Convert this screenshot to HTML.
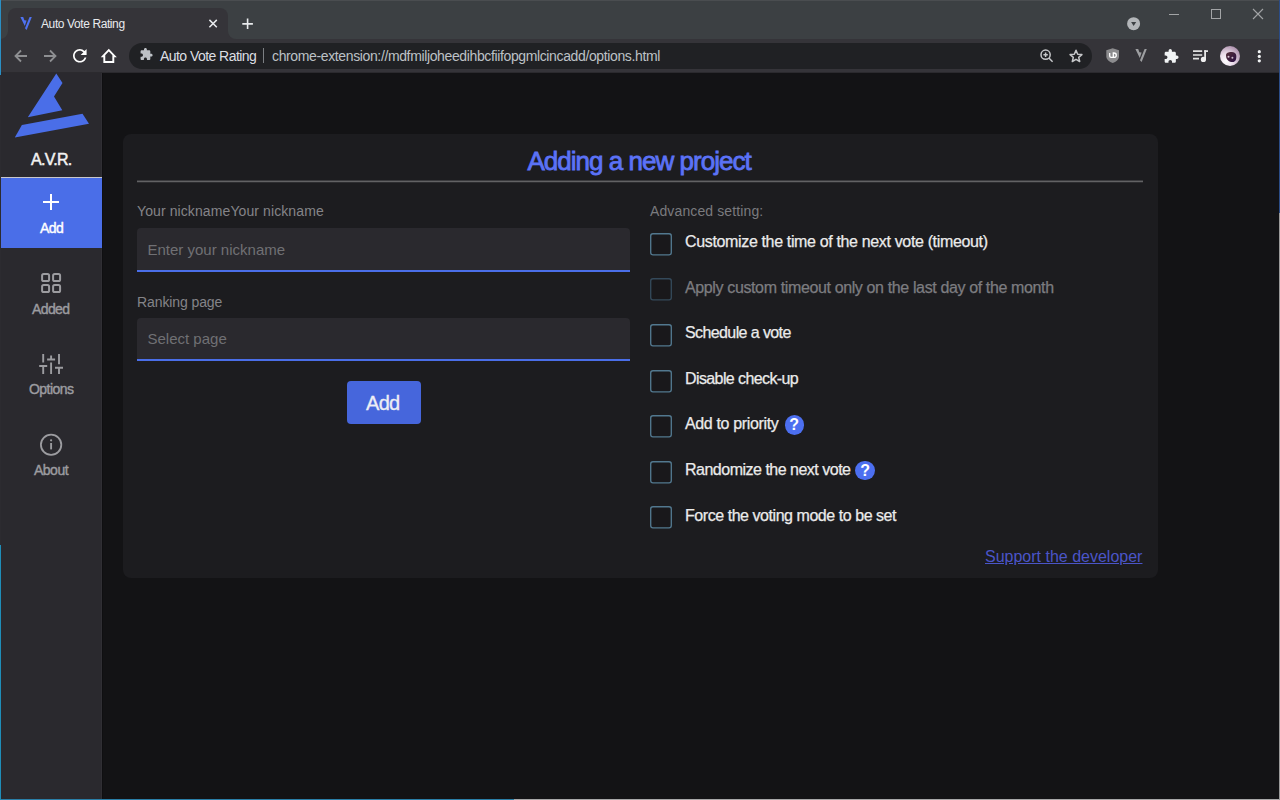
<!DOCTYPE html>
<html><head><meta charset="utf-8">
<style>
*{box-sizing:border-box;margin:0;padding:0}
html,body{width:1280px;height:800px;overflow:hidden}
body{position:relative;background:#3c4043;font-family:"Liberation Sans",sans-serif}
.a{position:absolute}
.t{position:absolute;white-space:nowrap;line-height:1}
.s{-webkit-text-stroke:0.25px currentColor}
.n{-webkit-text-stroke:0.4px currentColor}
svg{position:absolute;overflow:visible}
</style></head><body>
<!-- desktop edges -->
<div class="a" style="left:1px;top:0;width:1279px;height:1px;background:#4a4d50"></div>

<!-- tab -->
<div class="a" style="left:8px;top:8px;width:220px;height:32px;background:#353439;border-radius:8px 8px 0 0"></div>
<svg style="left:0;top:31px" width="8" height="9"><path d="M0 8 A8 8 0 0 0 8 0 V9 H0Z" fill="#353439"/></svg>
<svg style="left:228px;top:31px" width="8" height="9"><path d="M8 8 A8 8 0 0 1 0 0 V9 H8Z" fill="#353439"/></svg>
<!-- favicon -->
<svg style="left:0;top:0" width="40" height="40" viewBox="0 0 40 40"><path d="M20.4 17 L23.2 17 L24.4 20.2 L26.6 20.6 L24.8 26Z" fill="#4f72f2"/><path d="M29.6 17 L31.8 17 L26.6 30 L25 28.2Z" fill="#4f72f2"/></svg>
<div class="t" style="left:41px;top:18px;font-size:12px;color:#e8eaed;letter-spacing:-0.4px">Auto Vote Rating</div>
<!-- tab close -->
<svg style="left:0;top:0" width="260" height="40" viewBox="0 0 260 40"><path d="M209.4 19.9 L216.8 27.3 M216.8 19.9 L209.4 27.3" stroke="#e8eaed" stroke-width="1.5"/><path d="M247.6 18.6 V29.1 M242.3 23.85 H252.9" stroke="#e8eaed" stroke-width="1.6"/></svg>
<!-- new tab -->

<!-- tab search -->
<svg style="left:1100px;top:0" width="60" height="40" viewBox="1100 0 60 40"><circle cx="1133.6" cy="23.7" r="6.5" fill="#b3b6b9"/><path d="M1131.1 22 H1136.2 L1133.65 25.9Z" fill="#3c4043"/></svg>
<!-- window controls -->
<div class="a" style="left:1169px;top:14px;width:10px;height:1px;background:#a2a4a6"></div>
<div class="a" style="left:1211px;top:9px;width:10px;height:10px;border:1px solid #a2a4a6"></div>
<svg style="left:1253px;top:9px" width="10" height="10"><path d="M0 0 L10 10 M10 0 L0 10" stroke="#a2a4a6" stroke-width="1.1"/></svg>

<!-- toolbar -->
<div class="a" style="left:1px;top:39px;width:1278px;height:34px;background:#353439"></div><div class="a" style="left:1px;top:72px;width:1278px;height:1px;background:#2b2a2e"></div>
<svg style="left:14px;top:49px" width="14" height="14"><path d="M13 7 H1.5 M7 1.5 L1.5 7 L7 12.5" stroke="#8e8f92" stroke-width="1.8" fill="none"/></svg>
<svg style="left:43px;top:49px" width="14" height="14"><path d="M1 7 H12.5 M7 1.5 L12.5 7 L7 12.5" stroke="#8e8f92" stroke-width="1.8" fill="none"/></svg>
<svg style="left:72.5px;top:49.3px" width="13.6" height="13.6" viewBox="4 4 16 16"><path d="M17.65 6.35A7.958 7.958 0 0012 4c-4.42 0-7.99 3.58-7.99 8s3.57 8 7.99 8c3.73 0 6.84-2.55 7.73-6h-2.08A5.99 5.99 0 0112 18c-3.31 0-6-2.690-6-6s2.69-6 6-6c1.66 0 3.140.69 4.220 1.78L13 11h7V4l-2.35 2.35z" fill="#fff"/></svg>
<svg style="left:0;top:40px" width="130" height="30" viewBox="0 40 130 30"><path d="M103 56.2 L108.8 50.2 L114.6 56.2 H113.3 V62 H104.3 V56.2Z" stroke="#fff" stroke-width="1.9" fill="none" stroke-linejoin="miter" stroke-miterlimit="3"/></svg>

<!-- omnibox -->
<div class="a" style="left:129px;top:43px;width:963px;height:26px;border-radius:13px;background:#202124"></div>
<svg style="left:139.8px;top:48.2px" width="12.6" height="12.6" viewBox="1 1 22 22"><path d="M20.5 11H19V7c0-1.1-.9-2-2-2h-4V3.5C13 2.12 11.88 1 10.5 1S8 2.12 8 3.5V5H4c-1.1 0-1.99.9-1.99 2v3.8H3.5c1.49 0 2.7 1.21 2.7 2.7s-1.21 2.7-2.7 2.7H2V20c0 1.1.9 2 2 2h3.8v-1.5c0-1.49 1.21-2.7 2.7-2.7 1.49 0 2.7 1.21 2.7 2.7V22H17c1.1 0 2-.9 2-2v-4h1.5c1.38 0 2.5-1.12 2.5-2.5S21.88 11 20.5 11z" fill="#bdc1c6"/></svg>
<div class="t" style="left:160px;top:49px;font-size:14px;color:#dcdee2;letter-spacing:-0.55px">Auto Vote Rating</div>
<div class="a" style="left:263px;top:48px;width:1px;height:15px;background:#7c7f83"></div>
<div class="t" style="left:272px;top:49px;font-size:14px;color:#bdc1c6;letter-spacing:-0.37px">chrome-extension://mdfmiljoheedihbcfiifopgmlcincadd/options.html</div>
<!-- zoom icon -->
<svg style="left:0;top:40px" width="1100" height="30" viewBox="0 40 1100 30"><circle cx="1045.6" cy="54.7" r="4.6" stroke="#c6c7c9" stroke-width="1.5" fill="none"/><path d="M1048.9 58 L1052.6 61.7 M1045.6 52.5 V56.9 M1043.4 54.7 H1047.8" stroke="#c6c7c9" stroke-width="1.5"/>
<path d="M1076 50.3 L1077.7 54.2 L1081.9 54.6 L1078.7 57.4 L1079.7 61.5 L1076 59.3 L1072.3 61.5 L1073.3 57.4 L1070.1 54.6 L1074.3 54.2Z" stroke="#c6c7c9" stroke-width="1.5" fill="none" stroke-linejoin="round"/></svg>

<!-- extensions -->
<svg style="left:0;top:0" width="1280" height="80" viewBox="0 0 1280 80"><path d="M1112.7 48.2 L1119 50.2 V56.5 C1119 59.5 1116 61.8 1112.7 63 C1109.4 61.8 1106.3 59.5 1106.3 56.5 V50.2Z" fill="#8c8c8e"/><path d="M1109.7 53 V55.9 Q1109.7 57.3 1111.1 57.3 H1113.3 V53 H1114 Q1116.3 53 1116.3 55.15 Q1116.3 57.3 1114 57.3 H1113.3" stroke="#fff" stroke-width="1.3" fill="none"/></svg>
<svg style="left:1115.2px;top:32px" width="40" height="40" viewBox="0 0 40 40"><path d="M20.4 17 L23.2 17 L24.4 20.2 L26.6 20.6 L24.8 26Z" fill="#9d9ea1"/><path d="M29.6 17 L31.8 17 L26.6 30 L25 28.2Z" fill="#9d9ea1"/></svg>
<svg style="left:1164px;top:48.5px" width="14.5" height="14.5" viewBox="1 1 22 22"><path d="M20.5 11H19V7c0-1.1-.9-2-2-2h-4V3.5C13 2.12 11.88 1 10.5 1S8 2.12 8 3.5V5H4c-1.1 0-1.99.9-1.99 2v3.8H3.5c1.49 0 2.7 1.21 2.7 2.7s-1.21 2.7-2.7 2.7H2V20c0 1.1.9 2 2 2h3.8v-1.5c0-1.49 1.21-2.7 2.7-2.7 1.49 0 2.7 1.21 2.7 2.7V22H17c1.1 0 2-.9 2-2v-4h1.5c1.38 0 2.5-1.12 2.5-2.5S21.88 11 20.5 11z" fill="#f1f3f4"/></svg>
<svg style="left:1180px;top:40px" width="40" height="30" viewBox="1180 40 40 30"><path d="M1193 51.1 H1202.2 M1193 55 H1202.2 M1193 58.7 H1199 M1204.2 51.1 H1208" stroke="#e2e2e2" stroke-width="1.7"/><path d="M1205.1 50.2 V59.5" stroke="#e8e8e8" stroke-width="1.8"/><circle cx="1203.4" cy="59.4" r="2.6" fill="#f0f0f0"/></svg>
<svg style="left:1219.5px;top:45.8px" width="20" height="20" viewBox="0 0 20 20"><defs><radialGradient id="av" cx="0.3" cy="0.75" r="0.85"><stop offset="0" stop-color="#ffffff"/><stop offset="0.45" stop-color="#e9dbe8"/><stop offset="1" stop-color="#a88aa8"/></radialGradient><linearGradient id="bl" x1="0" y1="0" x2="1" y2="1"><stop offset="0" stop-color="#553038"/><stop offset="1" stop-color="#2a0f45"/></linearGradient></defs><circle cx="10" cy="10" r="10" fill="url(#av)"/><path d="M6 9.5 C6 6.5 9 5.8 12 6 C15.5 6.3 17 8.5 16.2 12.5 C15.7 15.5 13.5 16.5 11 16 C8 15.2 6 13 6 9.5Z" fill="url(#bl)"/><circle cx="8.5" cy="10.8" r="1" fill="#d9c8d6"/><circle cx="12.4" cy="11.8" r="1" fill="#cdbccd"/></svg>
<svg style="left:1255px;top:48px" width="9" height="16"><circle cx="4.3" cy="3.7" r="1.6" fill="#f1f3f4"/><circle cx="4.3" cy="8.4" r="1.6" fill="#f1f3f4"/><circle cx="4.3" cy="12.8" r="1.6" fill="#f1f3f4"/></svg>
<!-- page -->
<div class="a" style="left:1px;top:73px;width:1278px;height:726px;background:#131315"></div>
<div class="a" style="left:0;top:799px;width:514px;height:1px;background:#2a7fa8"></div>
<div class="a" style="left:514px;top:799px;width:766px;height:1px;background:#a8a8a8"></div>
<div class="a" style="left:1279px;top:0;width:1px;height:213px;background:#2b4c86"></div><div class="a" style="left:1279px;top:213px;width:1px;height:587px;background:#9a9a9a"></div>

<!-- sidebar -->
<div id="side" class="a" style="left:1px;top:73px;width:101px;height:726px;background:#2a292e"></div>
<div class="a" style="left:101px;top:73px;width:1px;height:726px;background:#302f34"></div><div class="a" style="left:102px;top:73px;width:1px;height:726px;background:#0f0f11"></div>
<!-- logo -->
<svg style="left:0;top:73px" width="100" height="70" viewBox="0 73 100 70"><path d="M56.3 73.5 L62.5 83.1 L54 96.5 L62.3 110.3 L27.8 117.3Z" fill="#4a6ee8"/><path d="M14.8 137.5 L21.9 125 L82.5 113.8 L89 123.8Z" fill="#4a6ee8"/></svg>
<div class="t" style="left:31px;top:152px;font-size:16px;color:#f2f2f2;letter-spacing:-0.7px;-webkit-text-stroke:0.5px #f2f2f2">A.V.R.</div>
<!-- add nav -->
<div class="a" style="left:1px;top:177px;width:101px;height:1px;background:#c8c8cc"></div>
<div class="a" style="left:1px;top:178px;width:101px;height:70px;background:#4a6ee8"></div>
<svg style="left:43px;top:194px" width="16" height="16"><path d="M8 0 V16 M0 8 H16" stroke="#fff" stroke-width="2"/></svg>
<div class="t n" style="left:40px;top:221px;font-size:14px;color:#fff;letter-spacing:-0.5px">Add</div>
<!-- added nav -->
<svg style="left:41px;top:273px" width="21" height="21"><rect x="1.1" y="1.1" width="7" height="7" rx="1.6" stroke="#9c9ca0" stroke-width="2" fill="none"/><rect x="12.1" y="1.1" width="7" height="7" rx="1.6" stroke="#9c9ca0" stroke-width="2" fill="none"/><rect x="1.1" y="12.1" width="7" height="7" rx="1.6" stroke="#9c9ca0" stroke-width="2" fill="none"/><rect x="12.1" y="12.1" width="7" height="7" rx="1.6" stroke="#9c9ca0" stroke-width="2" fill="none"/></svg>
<div class="t n" style="left:32px;top:302px;font-size:14px;color:#9c9ca0;letter-spacing:-0.6px">Added</div>
<!-- options nav -->
<svg style="left:38px;top:353px" width="26" height="22"><path d="M5.2 1 V9.5 M5.2 12 V21 M1.2 13 H9.2 M13.1 2.5 V6.2 M9.1 6.5 H17.1 M13.1 9.5 V21 M21 1 V11.3 M21 14.5 V21 M17 14.7 H25" stroke="#9c9ca0" stroke-width="1.9"/></svg>
<div class="t n" style="left:29px;top:382px;font-size:14px;color:#9c9ca0;letter-spacing:-0.55px">Options</div>
<!-- about nav -->
<svg style="left:40px;top:433px" width="23" height="23"><circle cx="11.1" cy="11.75" r="10.2" stroke="#9c9ca0" stroke-width="1.8" fill="none"/><circle cx="11.1" cy="7.3" r="1.1" fill="#9c9ca0"/><path d="M11.1 10 V16.4" stroke="#9c9ca0" stroke-width="1.9"/></svg>
<div class="t n" style="left:34px;top:463px;font-size:14px;color:#9c9ca0;letter-spacing:-0.5px">About</div>

<!-- card -->
<div class="a" style="left:123px;top:134px;width:1035px;height:444px;background:#1c1c1f;border-radius:8px"></div>
<div class="t" style="left:527.5px;top:148px;font-size:26px;color:#5b72f6;letter-spacing:-0.98px;-webkit-text-stroke:0.8px #5b72f6">Adding a new project</div>
<svg style="left:0;top:170px" width="1280" height="20" viewBox="0 170 1280 20"><rect x="137" y="180.55" width="1006" height="1.7" fill="#626264"/></svg>

<div class="t" style="left:137px;top:204px;font-size:14px;color:#848488;letter-spacing:0.1px">Your nicknameYour nickname</div>
<div class="a" style="left:137px;top:228px;width:493px;height:44px;background:#2a292e;border-radius:4px 4px 0 0;border-bottom:2px solid #4a6ee8"></div>
<div class="t" style="left:147.5px;top:241.7px;font-size:15px;color:#707074;letter-spacing:0px">Enter your nickname</div>

<div class="t" style="left:137px;top:295px;font-size:14px;color:#848488;letter-spacing:-0.1px">Ranking page</div>
<div class="a" style="left:137px;top:318px;width:493px;height:43px;background:#2a292e;border-radius:4px 4px 0 0;border-bottom:2px solid #4a6ee8"></div>
<div class="t" style="left:147.5px;top:330.7px;font-size:15px;color:#707074;letter-spacing:0px">Select page</div>

<div class="a" style="left:347px;top:381px;width:74px;height:43px;background:#4666dc;border-radius:4px"></div>
<div class="t" style="left:366px;top:393px;font-size:20px;color:#eeeef4;letter-spacing:-0.7px;-webkit-text-stroke:0.3px #eeeef4">Add</div>

<div class="t" style="left:650px;top:204px;font-size:14px;color:#7a7a7e;letter-spacing:0.12px">Advanced setting:</div>
<svg style="left:650px;top:232.70px" width="22" height="23"><rect x="0.7" y="0.7" width="20.6" height="21.1" rx="2.2" fill="#19181b" stroke="#52788f" stroke-width="1.35"/></svg>
<div class="t s" style="left:685px;top:233.90px;font-size:16px;color:#ebebeb;letter-spacing:-0.35px">Customize the time of the next vote (timeout)</div>
<svg style="left:650px;top:278.33px" width="22" height="23"><rect x="0.7" y="0.7" width="20.6" height="21.1" rx="2.2" fill="#19181b" stroke="#34495a" stroke-width="1.35"/></svg>
<div class="t s" style="left:685px;top:279.53px;font-size:16px;color:#7c7c80;letter-spacing:-0.37px">Apply custom timeout only on the last day of the month</div>
<svg style="left:650px;top:323.96px" width="22" height="23"><rect x="0.7" y="0.7" width="20.6" height="21.1" rx="2.2" fill="#19181b" stroke="#52788f" stroke-width="1.35"/></svg>
<div class="t s" style="left:685px;top:325.16px;font-size:16px;color:#ebebeb;letter-spacing:-0.6px">Schedule a vote</div>
<svg style="left:650px;top:369.59px" width="22" height="23"><rect x="0.7" y="0.7" width="20.6" height="21.1" rx="2.2" fill="#19181b" stroke="#52788f" stroke-width="1.35"/></svg>
<div class="t s" style="left:685px;top:370.79px;font-size:16px;color:#ebebeb;letter-spacing:-0.6px">Disable check-up</div>
<svg style="left:650px;top:415.22px" width="22" height="23"><rect x="0.7" y="0.7" width="20.6" height="21.1" rx="2.2" fill="#19181b" stroke="#52788f" stroke-width="1.35"/></svg>
<div class="t s" style="left:685px;top:416.42px;font-size:16px;color:#ebebeb;letter-spacing:-0.35px">Add to priority</div>
<svg style="left:650px;top:460.85px" width="22" height="23"><rect x="0.7" y="0.7" width="20.6" height="21.1" rx="2.2" fill="#19181b" stroke="#52788f" stroke-width="1.35"/></svg>
<div class="t s" style="left:685px;top:462.05px;font-size:16px;color:#ebebeb;letter-spacing:-0.5px">Randomize the next vote</div>
<svg style="left:650px;top:506.48px" width="22" height="23"><rect x="0.7" y="0.7" width="20.6" height="21.1" rx="2.2" fill="#19181b" stroke="#52788f" stroke-width="1.35"/></svg>
<div class="t s" style="left:685px;top:507.68px;font-size:16px;color:#ebebeb;letter-spacing:-0.45px">Force the voting mode to be set</div>
<div id="q1" class="a" style="left:784.5px;top:415px;width:19.5px;height:19.5px;border-radius:50%;background:#4c6ff0;color:#fff;font-size:16px;font-weight:bold;text-align:center;line-height:20px">?</div>
<div id="q2" class="a" style="left:855.3px;top:460.7px;width:19.5px;height:19.5px;border-radius:50%;background:#4c6ff0;color:#fff;font-size:16px;font-weight:bold;text-align:center;line-height:20px">?</div>
<div class="t" style="left:985px;top:549px;font-size:16px;color:#4b55c8;text-decoration:underline">Support the developer</div>
<div class="a" style="left:0;top:0;width:1px;height:75px;background:#2a8fc4"></div>
<div class="a" style="left:0;top:75px;width:1px;height:470px;background:#2c2b30"></div>
<div class="a" style="left:0;top:545px;width:1px;height:255px;background:#1f8db8"></div>
</body></html>
